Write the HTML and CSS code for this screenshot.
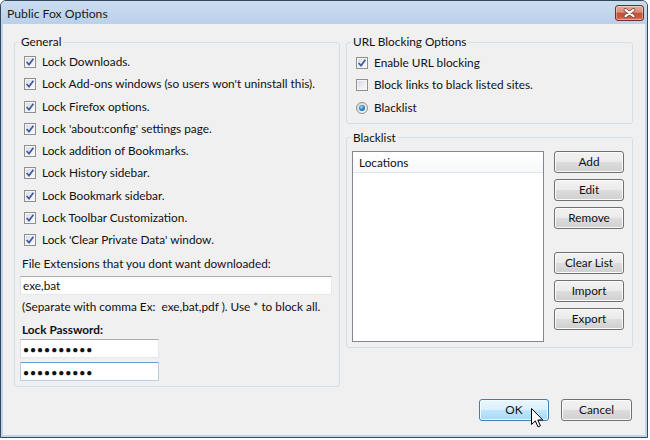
FILE: index.html
```html
<!DOCTYPE html>
<html>
<head>
<meta charset="utf-8">
<title>Public Fox Options</title>
<link rel="stylesheet" href="styles.css">
</head>
<body>
<div class="window">
  <div class="titlebar">
    <span class="title">Public Fox Options</span>
    <span class="close"><svg width="13" height="10" viewBox="0 0 13 10"><path d="M2.5 1.8 L10.5 8.2 M10.5 1.8 L2.5 8.2" stroke="#6b3a33" stroke-width="3.6" stroke-linecap="round" fill="none"/><path d="M2.5 1.8 L10.5 8.2 M10.5 1.8 L2.5 8.2" stroke="#ffffff" stroke-width="2.2" stroke-linecap="round" fill="none"/></svg></span>
  </div>
  <div class="client">
    <div class="main">
      <fieldset class="group general">
        <legend>General</legend>
        <div class="checks">
          <div class="row"><span class="cb"><svg width="10" height="10" viewBox="0 0 10 10"><path d="M1.6 5 L4 7.6 L8.4 1.8" stroke="#3f5aa0" stroke-width="1.7" fill="none"/></svg></span><span>Lock Downloads.</span></div>
          <div class="row"><span class="cb"><svg width="10" height="10" viewBox="0 0 10 10"><path d="M1.6 5 L4 7.6 L8.4 1.8" stroke="#3f5aa0" stroke-width="1.7" fill="none"/></svg></span><span>Lock Add-ons windows (so users won't uninstall this).</span></div>
          <div class="row"><span class="cb"><svg width="10" height="10" viewBox="0 0 10 10"><path d="M1.6 5 L4 7.6 L8.4 1.8" stroke="#3f5aa0" stroke-width="1.7" fill="none"/></svg></span><span>Lock Firefox options.</span></div>
          <div class="row"><span class="cb"><svg width="10" height="10" viewBox="0 0 10 10"><path d="M1.6 5 L4 7.6 L8.4 1.8" stroke="#3f5aa0" stroke-width="1.7" fill="none"/></svg></span><span>Lock 'about:config' settings page.</span></div>
          <div class="row"><span class="cb"><svg width="10" height="10" viewBox="0 0 10 10"><path d="M1.6 5 L4 7.6 L8.4 1.8" stroke="#3f5aa0" stroke-width="1.7" fill="none"/></svg></span><span>Lock addition of Bookmarks.</span></div>
          <div class="row"><span class="cb"><svg width="10" height="10" viewBox="0 0 10 10"><path d="M1.6 5 L4 7.6 L8.4 1.8" stroke="#3f5aa0" stroke-width="1.7" fill="none"/></svg></span><span>Lock History sidebar.</span></div>
          <div class="row"><span class="cb"><svg width="10" height="10" viewBox="0 0 10 10"><path d="M1.6 5 L4 7.6 L8.4 1.8" stroke="#3f5aa0" stroke-width="1.7" fill="none"/></svg></span><span>Lock Bookmark sidebar.</span></div>
          <div class="row"><span class="cb"><svg width="10" height="10" viewBox="0 0 10 10"><path d="M1.6 5 L4 7.6 L8.4 1.8" stroke="#3f5aa0" stroke-width="1.7" fill="none"/></svg></span><span>Lock Toolbar Customization.</span></div>
          <div class="row"><span class="cb"><svg width="10" height="10" viewBox="0 0 10 10"><path d="M1.6 5 L4 7.6 L8.4 1.8" stroke="#3f5aa0" stroke-width="1.7" fill="none"/></svg></span><span>Lock 'Clear Private Data' window.</span></div>
        </div>
        <div class="below">
          <div class="label ext-label">File Extensions that you dont want downloaded:</div>
          <div class="textbox wide">exe,bat</div>
          <div class="label hint">(Separate with comma Ex:&nbsp; exe,bat,pdf ). Use * to block all.</div>
          <div class="label pw-label">Lock Password:</div>
          <div class="textbox pwd first"><span class="dots">●●●●●●●●●●</span></div>
          <div class="textbox pwd focus"><span class="dots">●●●●●●●●●●</span></div>
        </div>
      </fieldset>
      <div class="rightcol">
        <fieldset class="group url">
          <legend>URL Blocking Options</legend>
          <div class="checks">
            <div class="row"><span class="cb"><svg width="10" height="10" viewBox="0 0 10 10"><path d="M1.6 5 L4 7.6 L8.4 1.8" stroke="#3f5aa0" stroke-width="1.7" fill="none"/></svg></span><span>Enable URL blocking</span></div>
            <div class="row"><span class="cb"></span><span>Block links to black listed sites.</span></div>
            <div class="row"><span class="rb"><span class="dot"></span></span><span>Blacklist</span></div>
          </div>
        </fieldset>
        <fieldset class="group blacklist">
          <legend>Blacklist</legend>
          <div class="bl-body">
            <div class="listview">
              <div class="lv-header">Locations</div>
            </div>
            <div class="bl-buttons">
              <button class="btn">Add</button>
              <button class="btn">Edit</button>
              <button class="btn">Remove</button>
              <button class="btn sep">Clear List</button>
              <button class="btn">Import</button>
              <button class="btn">Export</button>
            </div>
          </div>
        </fieldset>
      </div>
    </div>
    <div class="footer">
      <button class="btn ok">OK</button>
      <button class="btn cancel">Cancel</button>
    </div>
  </div>
</div>
<svg class="cursor" width="13" height="20" viewBox="0 0 13 20"><path d="M0.5 0.5 L0.5 16.5 L4.3 12.9 L7 18.9 L9.4 17.8 L6.8 12 L11.8 12 Z" fill="#ffffff" stroke="#000000" stroke-width="1" stroke-linejoin="miter"/></svg>
</body>
</html>
```
FILE: styles.css
```css
* { box-sizing: border-box; }
html, body { margin: 0; padding: 0; background: #ffffff; }
body {
  position: relative;
  width: 650px;
  height: 440px;
  overflow: hidden;
  font-family: Lato, "Noto Sans", sans-serif;
  font-size: 11.8px;
  color: #111;
}
.window {
  width: 648px;
  height: 438px;
  border: 1px solid #34495c;
  border-radius: 6px 6px 0 0;
  background: #c1d5ea;
  padding: 0 2px 2px 2px;
  display: flex;
  flex-direction: column;
}
.titlebar {
  height: 23px;
  margin: 0 -2px;
  padding: 0 3px 0 6px;
  display: flex;
  justify-content: space-between;
  align-items: flex-start;
  background: linear-gradient(#cbdcef, #bad1ea);
  border-radius: 5px 5px 0 0;
}
.title {
  padding-top: 5px;
  line-height: 16px;
  font-size: 12.2px;
  color: #1a1a1a;
}
.close {
  width: 29px;
  height: 16px;
  margin-top: 4px;
  border: 1px solid #6e2f26;
  border-radius: 3px;
  background: linear-gradient(#e7ab9c 0%, #d98c79 45%, #c6503a 50%, #c55a40 80%, #d9846a 100%);
  box-shadow: inset 0 0 0 1px rgba(255,255,255,0.35);
  display: flex;
  align-items: center;
  justify-content: center;
}
.client {
  flex: 1;
  background: #f0f0f0;
  padding: 10px 0 0 11px;
  display: flex;
  flex-direction: column;
}
.main {
  display: flex;
  gap: 6px;
  align-items: flex-start;
}
fieldset.group {
  margin: 0;
  padding: 0;
  min-width: 0;
  border: 1px solid #d5dfe5;
  border-radius: 3px;
}
legend {
  margin-left: 4px;
  padding: 0 2px;
  line-height: 16px;
  font-size: 11.8px;
  color: #111;
}
.general { width: 326px; }
.rightcol {
  width: 287px;
  display: flex;
  flex-direction: column;
  gap: 6px;
}
.checks { padding: 1px 0 0 9px; }
.row {
  height: 22.25px;
  display: flex;
  align-items: center;
  gap: 6px;
  line-height: 16px;
  white-space: nowrap;
}
.cb {
  flex: none;
  width: 12px;
  height: 12px;
  border: 1px solid #8e8f8f;
  background: linear-gradient(135deg, #d3d6de 0%, #eef0f4 60%, #fafafa 100%);
  box-shadow: inset 0 0 0 1px #f6f6f6;
  display: flex;
  align-items: center;
  justify-content: center;
}
.rb {
  flex: none;
  width: 12px;
  height: 12px;
  border: 1px solid #8e8f8f;
  border-radius: 50%;
  background: linear-gradient(135deg, #d6d8dc, #f8f8f8);
  display: flex;
  align-items: center;
  justify-content: center;
}
.rb .dot {
  width: 6px;
  height: 6px;
  border-radius: 50%;
  background: radial-gradient(circle at 40% 35%, #a8dcf7 0%, #2e86c8 45%, #0f4b86 100%);
}
.below { padding: 0 0 5px 5px; }
.label {
  line-height: 16px;
  padding-left: 2px;
  white-space: nowrap;
}
.ext-label { margin-top: 5px; }
.hint { margin-top: 4px; }
.pw-label { margin-top: 7px; font-weight: bold; }
.textbox {
  height: 19px;
  background: #fff;
  border: 1px solid #e3e9ef;
  border-top-color: #abadb3;
  border-left-color: #dbdfe6;
  padding-left: 2px;
  line-height: 17px;
  white-space: nowrap;
}
.wide { width: 312px; margin-top: 4px; }
.pwd { width: 139px; margin-top: 4px; }
.pwd.first { margin-top: 1px; }
.pwd.focus {
  border-color: #b5cfe7;
  border-top-color: #6e9dc9;
}
.dots {
  font-family: "Liberation Sans", sans-serif;
  font-size: 10px;
  letter-spacing: 1px;
}
.url .checks { padding: 2px 0 4px 9px; }
.bl-body {
  display: flex;
  padding: 5px 0 5px 5px;
}
.listview {
  width: 192px;
  height: 191px;
  background: #fff;
  border: 1px solid #828790;
}
.lv-header {
  height: 21px;
  padding: 2px 0 0 6px;
  line-height: 18px;
  border-bottom: 1px solid #e2e3e5;
  background: linear-gradient(#ffffff, #f7f8f9);
}
.bl-buttons {
  margin-left: 10px;
  display: flex;
  flex-direction: column;
  gap: 6px;
}
.btn {
  width: 70px;
  height: 22px;
  padding: 0;
  border: 1px solid #707070;
  border-radius: 3px;
  background: linear-gradient(#f2f2f2 0%, #ebebeb 48%, #dddddd 52%, #cfcfcf 100%);
  box-shadow: inset 0 0 0 1px #fbfbfb;
  font-family: Lato, "Noto Sans", sans-serif;
  font-size: 11.8px;
  color: #111;
  line-height: 18px;
}
.btn.sep { margin-top: 17px; }
.footer {
  display: flex;
  justify-content: flex-end;
  gap: 12px;
  margin-top: 12px;
  padding-right: 13px;
}
.btn.ok {
  width: 70px;
  border-color: #3c7fb1;
  background: linear-gradient(#eaf6fd 0%, #d9f0fc 48%, #bee6fd 52%, #a7d9f5 100%);
  box-shadow: inset 0 0 0 1px #f4fbff;
}
.btn.cancel { width: 71px; }
.cursor {
  position: absolute;
  left: 531px;
  top: 408px;
}
```
